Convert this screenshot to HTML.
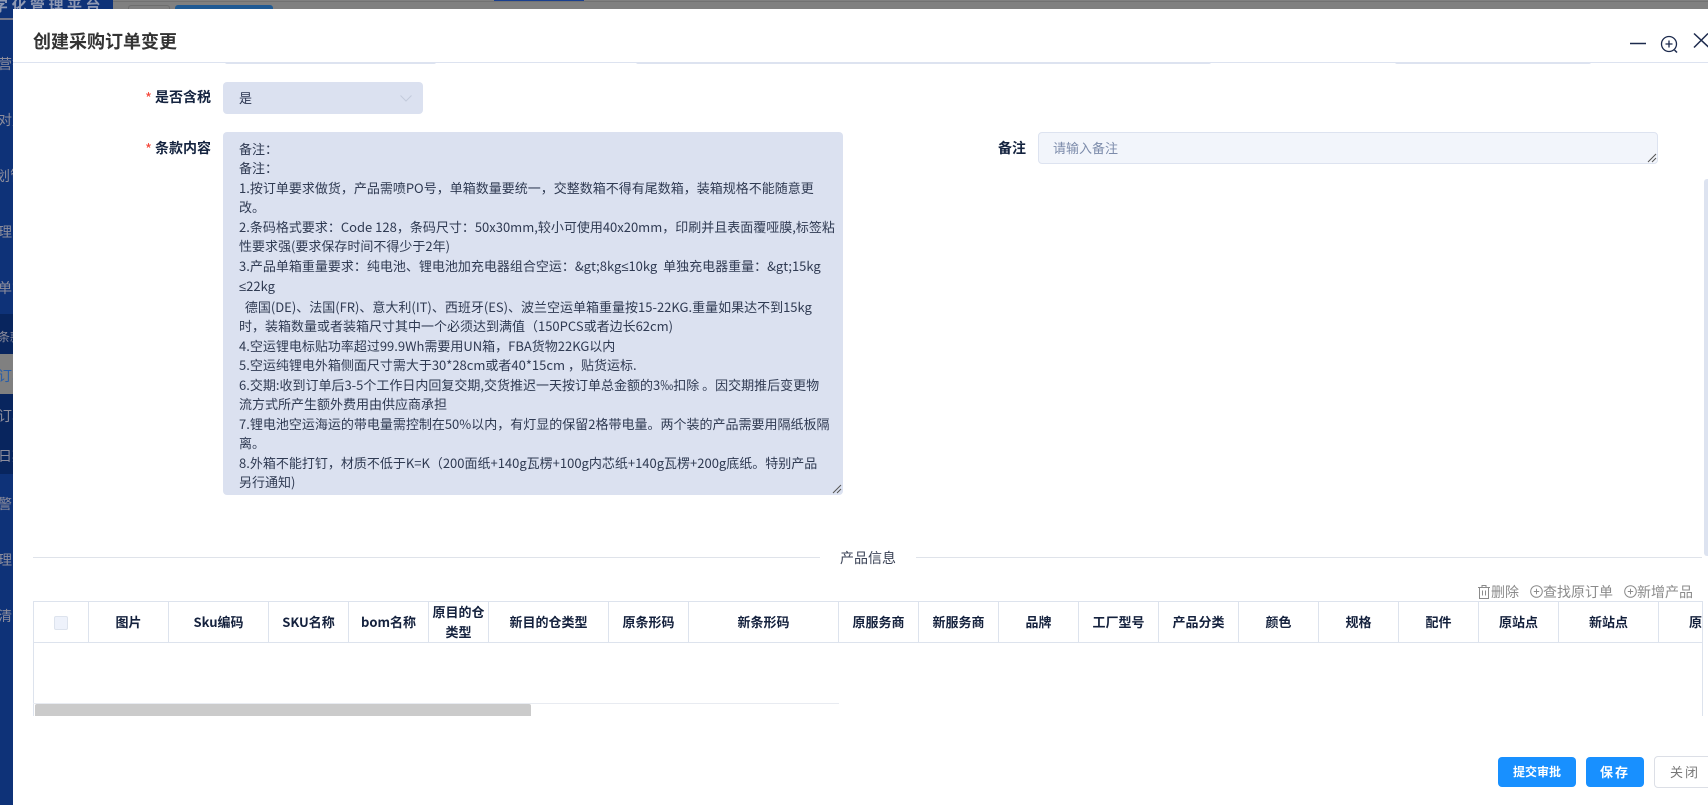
<!DOCTYPE html>
<html lang="zh"><head><meta charset="utf-8"><title>创建采购订单变更</title>
<style>
html,body{margin:0;padding:0;width:1708px;height:805px;overflow:hidden;background:#fff}
body{font-family:"Noto Sans CJK SC","Liberation Sans",sans-serif;position:relative}
.a{position:absolute;white-space:nowrap}
.side{position:absolute;left:0;top:0;width:14px;height:805px;background:#0e3278;overflow:hidden}
.side span{position:absolute;left:-2px;font-size:14px;line-height:20px;color:#8d8d9c;white-space:nowrap}
.modal{position:absolute;left:13px;top:9px;width:1695px;height:796px;background:#fff}
.lab{font-size:14px;font-weight:700;color:#14233f;line-height:20px}
.th{position:absolute;top:602px;height:40px;border-right:1px solid #dde3ed;box-sizing:border-box;display:flex;align-items:center;justify-content:center;text-align:center;font-size:13px;font-weight:700;color:#14213d;line-height:20px}
.tool{font-size:13px;line-height:20px;color:#8b8b8b}
.btn{position:absolute;top:757px;height:30px;background:#1890ff;border-radius:4px;color:#fff;font-size:12px;font-weight:700;line-height:30px;text-align:center}
.le{font-family:"Liberation Sans",sans-serif}
</style></head><body>
<div class="a" style="left:0;top:0;width:1708px;height:9px;background:#808080"></div>
<div class="a" style="left:0;top:1px;width:1708px;height:1px;background:#727272"></div>
<div class="a" style="left:128px;top:5px;width:42px;height:4px;border:1px solid #6e6e6e;border-bottom:0;border-radius:3px 3px 0 0;box-sizing:border-box"></div>
<div class="a" style="left:175px;top:5px;width:98px;height:4px;background:#1f5a94;border-radius:3px 3px 0 0"></div>
<div class="a" style="left:494px;top:0;width:90px;height:1px;background:#1a3f8f"></div>
<div class="a" style="left:0;top:0;width:113px;height:18px;background:#0e3278"></div>

<div class="side">
<div class="a" style="left:0;top:18px;width:14px;height:2px;background:#73768a"></div>
<div class="a" style="left:0;top:314px;width:14px;height:160px;background:#08255e"></div>
<div class="a" style="left:0;top:354px;width:14px;height:40px;background:#808080"></div>
<span style="top:54px">营销</span>
<span style="top:110px">对账</span>
<span style="top:166px;left:-4px">划管</span>
<span style="top:222px">理</span>
<span style="top:278px">单管</span>
<span style="top:327px;font-size:12px">条款</span>
<span style="top:366px;color:#2a5ea8">订单</span>
<span style="top:406px">订单</span>
<span style="top:446px">日期</span>
<span style="top:494px">警</span>
<span style="top:550px">理</span>
<span style="top:606px">清</span>
</div>
<div class="a" style="left:-7px;top:-5px;font-size:15px;font-weight:700;letter-spacing:3.5px;line-height:22px;color:#8f99b3">字化管理平台</div>

<div class="modal"></div>
<div class="a" style="left:33px;top:29px;font-size:18px;font-weight:700;line-height:24px;color:#333">创建采购订单变更</div>

<div class="a" style="left:225px;top:62px;width:211px;height:2px;background:#dde3f0;border-radius:0 0 3px 3px"></div>
<div class="a" style="left:636px;top:62px;width:575px;height:2px;background:#dde3f0;border-radius:0 0 3px 3px"></div>
<div class="a" style="left:1395px;top:62px;width:196px;height:2px;background:#dde3f0;border-radius:0 0 3px 3px"></div>
<div class="a" style="left:13px;top:62px;width:1695px;height:1px;background:#dde3f0"></div>

<svg class="a" style="left:1620px;top:25px" width="88" height="35" viewBox="1620 25 88 35" fill="none" stroke="#1c2a4d">
<path d="M1630 43.5h16" stroke-width="1.5"/>
<circle cx="1669" cy="44" r="7.5" stroke-width="1.3"/>
<path d="M1665.5 44h7M1669 40.5v7" stroke-width="1.3"/>
<path d="M1674.5 50l2.5 2.5" stroke-width="1.5"/>
<path d="M1694 33.5L1709 47.5M1708 33.5L1694 47.5" stroke-width="1.5"/>
</svg>

<div class="a" style="left:145px;top:89px;color:#f5483b;font-size:15px;line-height:20px">*</div>
<div class="a lab" style="left:155px;top:87px">是否含税</div>
<div class="a" style="left:223px;top:82px;width:200px;height:32px;background:#dbe1f0;border-radius:4px"></div>
<div class="a" style="left:239px;top:88px;font-size:13px;line-height:20px;color:#2b3550">是</div>
<svg class="a" style="left:399px;top:94px" width="14" height="9" fill="none" stroke="#c3cbdc" stroke-width="1"><path d="M1.5 1.5L7 7l5.5-5.5"/></svg>

<div class="a" style="left:145px;top:140px;color:#f5483b;font-size:15px;line-height:20px">*</div>
<div class="a lab" style="left:155px;top:138px">条款内容</div>

<div class="a" style="left:223px;top:132px;width:620px;height:363px;background:#dbe1f0;border-radius:4px"></div>
<div class="a" style="left:239px;top:138.5px;font-size:13px;line-height:19.5px;color:#2f3a52">备注：<br>备注：<br>1.按订单要求做货，产品需喷PO号，单箱数量要统一，交整数箱不得有尾数箱，装箱规格不能随意更<br>改。<br>2.条码格式要求：Code 128，条码尺寸：50x30mm,较小可使用40x20mm，印刷并且表面覆哑膜,标签粘<br>性要求强(要求保存时间不得少于2年)<br>3.产品单箱重量要求：纯电池、锂电池加充电器组合空运：&amp;gt;8kg<span class="le">≤</span>10kg&nbsp; 单独充电器重量：&amp;gt;15kg<br><span class="le">≤</span>22kg<br>&nbsp; 德国(DE)、法国(FR)、意大利(IT)、西班牙(ES)、波兰空运单箱重量按15-22KG.重量如果达不到15kg<br>时，装箱数量或者装箱尺寸其中一个必须达到满值（150PCS或者边长62cm)<br>4.空运锂电标贴功率超过99.9Wh需要用UN箱，FBA货物22KG以内<br>5.空运纯锂电外箱侧面尺寸需大于30*28cm或者40*15cm ，贴货运标.<br>6.交期:收到订单后3-5个工作日内回复交期,交货推迟一天按订单总金额的3‰扣除 。因交期推后变更物<br>流方式所产生额外费用由供应商承担<br>7.锂电池空运海运的带电量需控制在50%以内，有灯显的保留2格带电量。两个装的产品需要用隔纸板隔<br>离。<br>8.外箱不能打钉，材质不低于K=K（200面纸+140g瓦楞+100g内芯纸+140g瓦楞+200g底纸。特别产品<br>另行通知)</div>
<svg class="a" style="left:832px;top:484px" width="10" height="10" fill="none" stroke="#555" stroke-width="1"><path d="M1 9L9 1M5 9l4-4"/></svg>

<div class="a lab" style="left:998px;top:138px">备注</div>
<div class="a" style="left:1038px;top:132px;width:620px;height:32px;box-sizing:border-box;background:#f2f5fb;border:1px solid #dde3f0;border-radius:4px"></div>
<div class="a" style="left:1053px;top:138px;font-size:13px;line-height:20px;color:#7d8cab">请输入备注</div>
<svg class="a" style="left:1647px;top:153px" width="10" height="10" fill="none" stroke="#555" stroke-width="1"><path d="M1 9L9 1M5 9l4-4"/></svg>

<div class="a" style="left:1704px;top:179px;width:4px;height:377px;background:#dde3f0;border-radius:3px 0 0 3px"></div>

<div class="a" style="left:33px;top:557px;width:787px;height:1px;background:#dfe3ea"></div>
<div class="a" style="left:916px;top:557px;width:786px;height:1px;background:#dfe3ea"></div>
<div class="a" style="left:840px;top:548px;font-size:14px;line-height:20px;color:#3a4256">产品信息</div>

<svg class="a" style="left:1477px;top:584px" width="14" height="16" fill="none" stroke="#8b8b8b" stroke-width="1"><path d="M1 3.5h12M5 3.5V1.5h4v2M2.500 3.500v11h9v-11M5.500 6.500v5M8.500 6.500v5"/></svg>
<div class="a tool" style="left:1491px;top:582px;font-size:14px">删除</div>
<svg class="a" style="left:1530px;top:585px" width="13" height="13" fill="none" stroke="#8b8b8b" stroke-width="1"><circle cx="6.500" cy="6.500" r="5.800"/><path d="M3.800 6.500h5.400M6.500 3.800v5.400"/></svg>
<div class="a tool" style="left:1543px;top:582px;font-size:14px">查找原订单</div>
<svg class="a" style="left:1624px;top:585px" width="13" height="13" fill="none" stroke="#8b8b8b" stroke-width="1"><circle cx="6.500" cy="6.500" r="5.800"/><path d="M3.800 6.500h5.400M6.500 3.800v5.400"/></svg>
<div class="a tool" style="left:1637px;top:582px;font-size:14px">新增产品</div>

<div class="a" style="left:33px;top:601px;width:1670px;height:1px;background:#dde3ed"></div>
<div class="a" style="left:33px;top:642px;width:1670px;height:1px;background:#dde3ed"></div>
<div class="a" style="left:33px;top:601px;width:1px;height:115px;background:#dde3ed"></div>
<div class="a" style="left:1702px;top:601px;width:1px;height:115px;background:#dde3ed"></div>
<div class="a" style="left:33px;top:703px;width:806px;height:1px;background:#e8ebf1"></div>

<div class="th" style="left:34px;width:55px"></div>
<div class="a" style="left:54px;top:616px;width:14px;height:14px;box-sizing:border-box;background:#eef2fb;border:1px solid #dde3ed;border-radius:2px"></div>
<div class="th" style="left:89px;width:80px">图片</div>
<div class="th" style="left:169px;width:100px">Sku编码</div>
<div class="th" style="left:269px;width:80px">SKU名称</div>
<div class="th" style="left:349px;width:80px">bom名称</div>
<div class="th" style="left:429px;width:60px">原目的仓<br>类型</div>
<div class="th" style="left:489px;width:120px">新目的仓类型</div>
<div class="th" style="left:609px;width:80px">原条形码</div>
<div class="th" style="left:689px;width:150px">新条形码</div>
<div class="th" style="left:839px;width:80px">原服务商</div>
<div class="th" style="left:919px;width:80px">新服务商</div>
<div class="th" style="left:999px;width:80px">品牌</div>
<div class="th" style="left:1079px;width:80px">工厂型号</div>
<div class="th" style="left:1159px;width:80px">产品分类</div>
<div class="th" style="left:1239px;width:80px">颜色</div>
<div class="th" style="left:1319px;width:80px">规格</div>
<div class="th" style="left:1399px;width:80px">配件</div>
<div class="th" style="left:1479px;width:80px">原站点</div>
<div class="th" style="left:1559px;width:100px">新站点</div>
<div class="a" style="left:1689px;top:612px;width:13px;overflow:hidden;font-size:13px;font-weight:700;line-height:20px;color:#14213d">原</div>

<div class="a" style="left:35px;top:704px;width:496px;height:12px;background:#cbcbcb;border-radius:2px 2px 0 0"></div>

<div class="btn" style="left:1498px;width:78px">提交审批</div>
<div class="btn" style="left:1586px;width:58px;font-size:13px;letter-spacing:2px">保存</div>
<div class="a" style="left:1654px;top:756px;width:60px;height:32px;box-sizing:border-box;background:#fff;border:1px solid #dcdfe6;border-radius:4px"></div>
<div class="a" style="left:1670px;top:762px;font-size:13px;letter-spacing:2px;line-height:20px;color:#777">关闭</div>
</body></html>
